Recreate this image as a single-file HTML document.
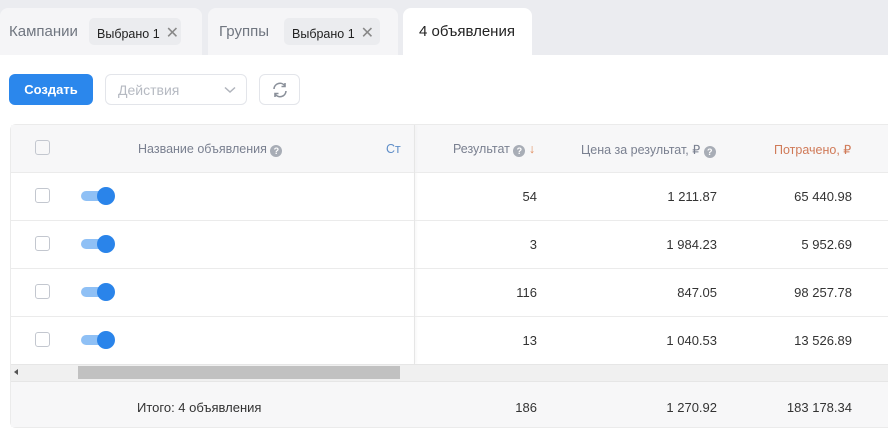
<!DOCTYPE html>
<html><head><meta charset="utf-8"><style>
*{margin:0;padding:0;box-sizing:border-box}
body{width:888px;height:431px;overflow:hidden;background:#fff;font-family:"Liberation Sans","Noto Sans CJK SC",sans-serif;position:relative;color:#333}
.abs{position:absolute}
.top{left:0;top:0;width:888px;height:55px;background:#ebecf0}
.tab{top:8px;height:47px;background:#f5f5f7;border-radius:8px 8px 0 0}
.tt{font-size:15px;color:#707680;top:23px}
.chip{top:18px;height:27px;background:#ebecef;border-radius:5px;font-size:12.5px;color:#222;padding:5px 0 0 8px}
.chip span{color:#888;font-size:16px;margin-left:6px;position:relative;top:0}
.btn{top:74px;height:31px;border-radius:6px}
.h{font-size:12.5px;color:#7a8090;top:142px}
.q{display:inline-block;width:12px;height:12px;border-radius:50%;background:#a8adb6;color:#fff;font-size:9px;text-align:center;line-height:12px;font-weight:bold;vertical-align:-1px}
.row{left:10px;width:878px;height:48px;border-top:1px solid #ebebeb}
.cb{width:15px;height:15px;border:1.5px solid #c3c7cf;border-radius:3px;left:35px}
.tg{left:81px;width:36px;height:18px}
.tg i{position:absolute;left:0;top:4px;width:30px;height:10px;border-radius:5px;background:#8fc0f5}
.tg b{position:absolute;left:16px;top:0;width:18px;height:18px;border-radius:50%;background:#2a84ea}
.n{font-size:13px;color:#333;text-align:right}
</style></head><body>
<div class="abs top"></div>
<div class="abs tab" style="left:0;width:202px"></div>
<div class="abs tab" style="left:208px;width:190px"></div>
<div class="abs tab" style="left:403px;width:129px;background:#fff"></div>
<div class="abs tt" style="left:9px">Кампании</div>
<div class="abs chip" style="left:89px;width:92px">Выбрано 1<span>✕</span></div>
<div class="abs tt" style="left:219px">Группы</div>
<div class="abs chip" style="left:284px;width:96px">Выбрано 1<span>✕</span></div>
<div class="abs tt" style="left:419px;color:#222">4 объявления</div>

<div class="abs btn" style="left:9px;width:84px;background:#2b87ec;color:#fff;font-size:13px;font-weight:bold;text-align:center;line-height:31px">Создать</div>
<div class="abs btn" style="left:105px;width:142px;border:1px solid #e3e5ea;color:#b6bac2;font-size:14px;padding:7px 0 0 12px">Действия
<svg class="abs" style="left:118px;top:11px" width="12" height="8" viewBox="0 0 12 8"><path d="M1 1.5l5 4.5 5-4.5" fill="none" stroke="#b0b4bc" stroke-width="1.5"/></svg></div>
<div class="abs btn" style="left:259px;width:41px;border:1px solid #e3e5ea">
<svg class="abs" style="left:11px;top:6px" width="18" height="18" viewBox="0 0 18 18" fill="none" stroke="#8a909a" stroke-width="1.6"><path d="M3 8a6 6 0 0 1 11-3"/><path d="M14 2v3.5h-3.5"/><path d="M15 10a6 6 0 0 1-11 3"/><path d="M4 16v-3.5h3.5"/></svg></div>

<div class="abs" style="left:10px;top:124px;width:878px;height:304px;border:1px solid #ebebeb;border-radius:6px 0 0 6px;border-right:none"></div>
<div class="abs" style="left:11px;top:125px;width:877px;height:47px;background:#f7f7f8"></div>
<div class="abs cb" style="top:140px"></div>
<div class="abs h" style="left:138px">Название объявления <span class="q">?</span></div>
<div class="abs h" style="left:386px;color:#5f8ec8">Ст</div>
<div class="abs h" style="left:453px">Результат <span class="q">?</span> <span style="color:#e08a5a">↓</span></div>
<div class="abs h" style="left:581px">Цена за результат, ₽ <span class="q">?</span></div>
<div class="abs h" style="left:774px;color:#d07a58">Потрачено, ₽</div>

<div class="abs row" style="top:172px"></div>
<div class="abs row" style="top:220px"></div>
<div class="abs row" style="top:268px"></div>
<div class="abs row" style="top:316px"></div>
<div class="abs" style="left:414px;top:125px;width:1px;height:239px;background:#e6e6e6;box-shadow:1px 0 2px #eee"></div>

<div class="abs cb" style="top:188px"></div><div class="abs tg" style="top:187px"><i></i><b></b></div>
<div class="abs cb" style="top:236px"></div><div class="abs tg" style="top:235px"><i></i><b></b></div>
<div class="abs cb" style="top:284px"></div><div class="abs tg" style="top:283px"><i></i><b></b></div>
<div class="abs cb" style="top:332px"></div><div class="abs tg" style="top:331px"><i></i><b></b></div>

<div class="abs n" style="left:437px;width:100px;top:189px">54</div>
<div class="abs n" style="left:597px;width:120px;top:189px">1 211.87</div>
<div class="abs n" style="left:732px;width:120px;top:189px">65 440.98</div>
<div class="abs n" style="left:437px;width:100px;top:237px">3</div>
<div class="abs n" style="left:597px;width:120px;top:237px">1 984.23</div>
<div class="abs n" style="left:732px;width:120px;top:237px">5 952.69</div>
<div class="abs n" style="left:437px;width:100px;top:285px">116</div>
<div class="abs n" style="left:597px;width:120px;top:285px">847.05</div>
<div class="abs n" style="left:732px;width:120px;top:285px">98 257.78</div>
<div class="abs n" style="left:437px;width:100px;top:333px">13</div>
<div class="abs n" style="left:597px;width:120px;top:333px">1 040.53</div>
<div class="abs n" style="left:732px;width:120px;top:333px">13 526.89</div>

<div class="abs" style="left:11px;top:364px;width:877px;height:17px;background:#f0f0f0;border-top:1px solid #e6e6e6"></div>
<div class="abs" style="left:78px;top:366px;width:322px;height:13px;background:#c1c1c1"></div>
<div class="abs" style="left:14px;top:369px;width:0;height:0;border:3px solid transparent;border-right:4px solid #555;border-left:none"></div>

<div class="abs" style="left:11px;top:381px;width:877px;height:46px;background:#f7f7f8;border-top:1px solid #e6e6e6"></div>
<div class="abs n" style="left:137px;top:400px;text-align:left">Итого: 4 объявления</div>
<div class="abs n" style="left:437px;width:100px;top:400px">186</div>
<div class="abs n" style="left:597px;width:120px;top:400px">1 270.92</div>
<div class="abs n" style="left:732px;width:120px;top:400px">183 178.34</div>
</body></html>
